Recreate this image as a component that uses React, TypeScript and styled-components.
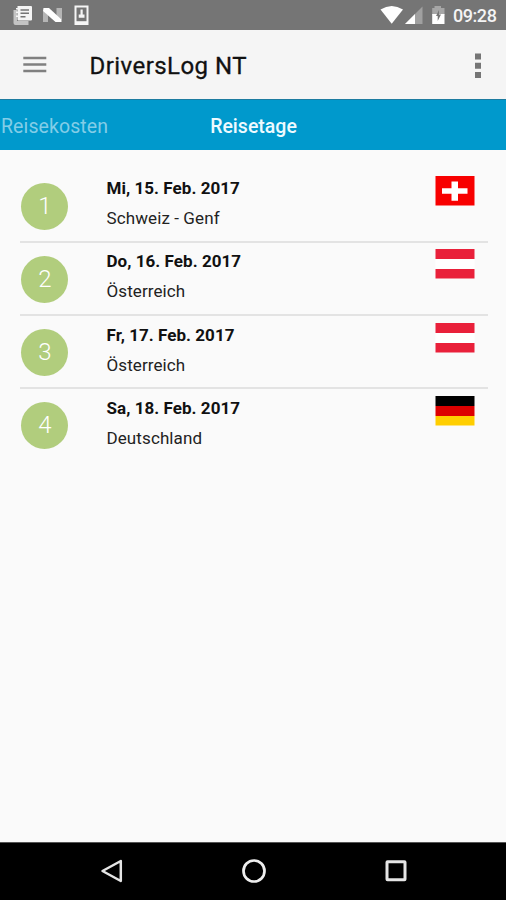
import React from 'react';
import styled, { createGlobalStyle } from 'styled-components';

const GlobalStyle = createGlobalStyle`
  * { box-sizing: border-box; }
  body { margin: 0; background: #fafafa; font-family: Roboto, "Noto Sans", sans-serif; }
`;

const Screen = styled.div`
  display: flex;
  flex-direction: column;
  width: 506px;
  height: 900px;
  overflow: hidden;
  background: #fafafa;
`;

const StatusBar = styled.header`
  flex: 0 0 30px;
  display: flex;
  justify-content: space-between;
  align-items: center;
  padding: 0 8px 0 12px;
  background: #757575;
  color: #fff;
`;

const StatusGroup = styled.div`
  display: flex;
  align-items: center;
  height: 30px;
`;

const Clock = styled.span`
  width: 45px;
  margin-left: 7px;
  padding-top: 2px;
  font-size: 18px;
  line-height: 20px;
  font-weight: 500;
  letter-spacing: -0.45px;
  white-space: nowrap;
  color: #f4f4f4;
`;

const Toolbar = styled.div`
  flex: 0 0 69px;
  display: flex;
  align-items: center;
  padding: 0 24px 0 23px;
  background: #f5f5f5;
`;

const IconButton = styled.button`
  display: flex;
  padding: 0;
  border: 0;
  background: none;
`;

const Title = styled.h1`
  flex: 1;
  margin: 2px 0 0 42.5px;
  font-size: 24px;
  line-height: 30px;
  font-weight: 400;
  letter-spacing: 0.45px;
  color: #111;
  -webkit-text-stroke: 0.3px #111;
`;

const TabStrip = styled.nav`
  flex: 0 0 51px;
  display: grid;
  grid-template-columns: 170px 167px 1fr;
  align-items: center;
  border-top: 1px solid #1c7ba0;
  background: #0099cc;
`;

const Tab = styled.span<{ $active?: boolean }>`
  padding-left: ${({ $active }) => ($active ? 0 : 1)}px;
  margin-top: 3px;
  text-align: ${({ $active }) => ($active ? 'center' : 'left')};
  font-size: 19.5px;
  line-height: 24px;
  font-weight: ${({ $active }) => ($active ? 500 : 400)};
  letter-spacing: ${({ $active }) => ($active ? 0 : 0.1)}px;
  color: ${({ $active }) => ($active ? '#eefaff' : '#83cde7')};
`;

const DayList = styled.ul`
  flex: 1;
  margin: 0;
  padding: 20px 18px 0 20px;
  list-style: none;
`;

const DayRow = styled.li`
  display: grid;
  grid-template-columns: 86.5px 1fr 40px;
  align-items: start;
  height: 73.1px;
  padding: 0 13px 0 0;
  border-bottom: 2px solid #e3e3e3;
  &:last-child { border-bottom: 0; }
`;

const DayNumber = styled.span`
  display: flex;
  align-items: center;
  justify-content: center;
  width: 47px;
  height: 47px;
  margin: 12.5px 0 0 1.3px;
  border-radius: 50%;
  background: #b1cd7d;
  color: #fff;
  font-size: 24px;
  line-height: 47px;
  font-weight: 300;
`;

const DayText = styled.div`
  padding-top: 6.4px;
  color: #111;
`;

const DayDate = styled.div`
  font-size: 17px;
  line-height: 24px;
  font-weight: 700;
  letter-spacing: 0.05px;
`;

const DayPlace = styled.div`
  margin-top: 6px;
  font-size: 17px;
  line-height: 24px;
  letter-spacing: 0.1px;
  color: #222;
`;

const FlagSvg = styled.svg`
  display: block;
  width: 40px;
  height: 30px;
  margin-top: 6.4px;
`;

const NavBar = styled.footer`
  flex: 0 0 58px;
  display: flex;
  justify-content: space-between;
  align-items: center;
  padding: 0 98px 1px 100px;
  border-top: 1px solid #555;
  background: #000;
`;

type Country = 'ch' | 'at' | 'de';

const bands: Record<Country, string[]> = {
  ch: ['#f80000', '#f80000', '#f80000'],
  at: ['#e9203a', '#ffffff', '#e9203a'],
  de: ['#000000', '#dd0000', '#ffce00'],
};

function Flag({ country }: { country: Country }) {
  return (
    <FlagSvg viewBox="0 0 40 30" role="img">
      {country === 'ch' ? (
        <rect x="0.5" width="39" height="29.5" fill={bands.ch[0]} />
      ) : (
        bands[country].map((fill, i) => (
          <rect key={i} x="0.5" y={i * 10} width="39" height={i === 2 ? 9.5 : 10} fill={fill} />
        ))
      )}
      {country === 'ch' && <path d="M16.500 5.500h6.500v6.700h9.500v5.500H23v7h-6.500v-7H7v-5.500h9.500z" fill="#fff" />}
    </FlagSvg>
  );
}

const days: { date: string; place: string; country: Country }[] = [
  { date: 'Mi, 15. Feb. 2017', place: 'Schweiz - Genf', country: 'ch' },
  { date: 'Do, 16. Feb. 2017', place: 'Österreich', country: 'at' },
  { date: 'Fr, 17. Feb. 2017', place: 'Österreich', country: 'at' },
  { date: 'Sa, 18. Feb. 2017', place: 'Deutschland', country: 'de' },
];

const NotificationIcons = () => (
  <svg width="80" height="30" viewBox="12 0 80 30">
    <path d="M13.500 10H17v11h11.500v4H15.500q-2 0-2-2z" fill="#c4c4c4" />
    <path d="M17.500 6H31a1 1 0 0 1 1 1v12.500a1 1 0 0 1-1 1H18.500a1 1 0 0 1-1-1V17H16v-1.500h1.500V13H16v-1.500h1.500V9.500H16V8h1.500z" fill="#f5f5f5" />
    <path d="M20.500 10h8.500M20.500 13.300h8.500M20.500 16.800h5" stroke="#757575" strokeWidth="1.500" />
    <path d="M43 10.500v11.500h5v-7zM56.500 8H62v12l-5.500-4z" fill="#b5b5b5" />
    <path d="M43.500 8H49L61.500 19.500V22H55.500L43 11z" fill="#fff" />
    <rect x="75.500" y="6.500" width="12" height="17.500" fill="none" stroke="#f5f5f5" strokeWidth="2" />
    <path d="M80.500 9.500h2.200v5h1.800v3.300h-5.800v-3.300h1.800z" fill="#f5f5f5" />
    <path d="M75 22.700h13" stroke="#f5f5f5" strokeWidth="3" />
  </svg>
);

const SignalIcons = () => (
  <svg width="66" height="30" viewBox="380 0 66 30">
    <path d="M380.500 9.500Q391.700 2.500 403 9.500L391.700 23.800z" fill="#fff" />
    <path d="M422.500 6.500V24H405z" fill="#a0a0a0" />
    <path d="M415 14V24H405z" fill="#fff" />
    <path d="M434.500 6h6.500v2h3.500v7H432.200V8h2.300z" fill="#a6a6a6" />
    <path d="M432.200 14h12.300v10h-12.300z" fill="#fff" />
    <path d="M439 10v4.500h2l-3.300 6.500v-5H436z" fill="#757575" />
  </svg>
);

export default function App() {
  return (
    <Screen>
      <GlobalStyle />
      <StatusBar>
        <StatusGroup><NotificationIcons /></StatusGroup>
        <StatusGroup><SignalIcons /><Clock>09:28</Clock></StatusGroup>
      </StatusBar>
      <Toolbar>
        <IconButton aria-label="Menu">
          <svg width="24" height="30" viewBox="0 0 24 30">
            <path d="M.3 8h23M.3 14.500h23M.3 21h23" stroke="#808080" strokeWidth="2.500" />
          </svg>
        </IconButton>
        <Title>DriversLog NT</Title>
        <IconButton aria-label="More">
          <svg width="8" height="30" viewBox="0 0 8 30">
            <path d="M1 3.500h6v6H1zM1 12.700h6v6H1zM1 22h6v6H1z" fill="#757575" />
          </svg>
        </IconButton>
      </Toolbar>
      <TabStrip>
        <Tab>Reisekosten</Tab>
        <Tab $active>Reisetage</Tab>
      </TabStrip>
      <DayList>
        {days.map((day, i) => (
          <DayRow key={day.date}>
            <DayNumber>{i + 1}</DayNumber>
            <DayText>
              <DayDate>{day.date}</DayDate>
              <DayPlace>{day.place}</DayPlace>
            </DayText>
            <Flag country={day.country} />
          </DayRow>
        ))}
      </DayList>
      <NavBar>
        <IconButton aria-label="Back">
          <svg width="24" height="28" viewBox="0 0 24 28">
            <path d="M20.800 4L2.500 14l18.300 10z" fill="none" stroke="#e5e5e5" strokeWidth="2.500" strokeLinejoin="round" />
          </svg>
        </IconButton>
        <IconButton aria-label="Home">
          <svg width="28" height="28" viewBox="0 0 28 28">
            <circle cx="14" cy="14" r="10.500" fill="none" stroke="#eee" strokeWidth="2.700" />
          </svg>
        </IconButton>
        <IconButton aria-label="Overview">
          <svg width="24" height="28" viewBox="0 0 24 28">
            <rect x="3" y="4.700" width="18" height="18" rx="0.500" fill="none" stroke="#e5e5e5" strokeWidth="3" />
          </svg>
        </IconButton>
      </NavBar>
    </Screen>
  );
}
